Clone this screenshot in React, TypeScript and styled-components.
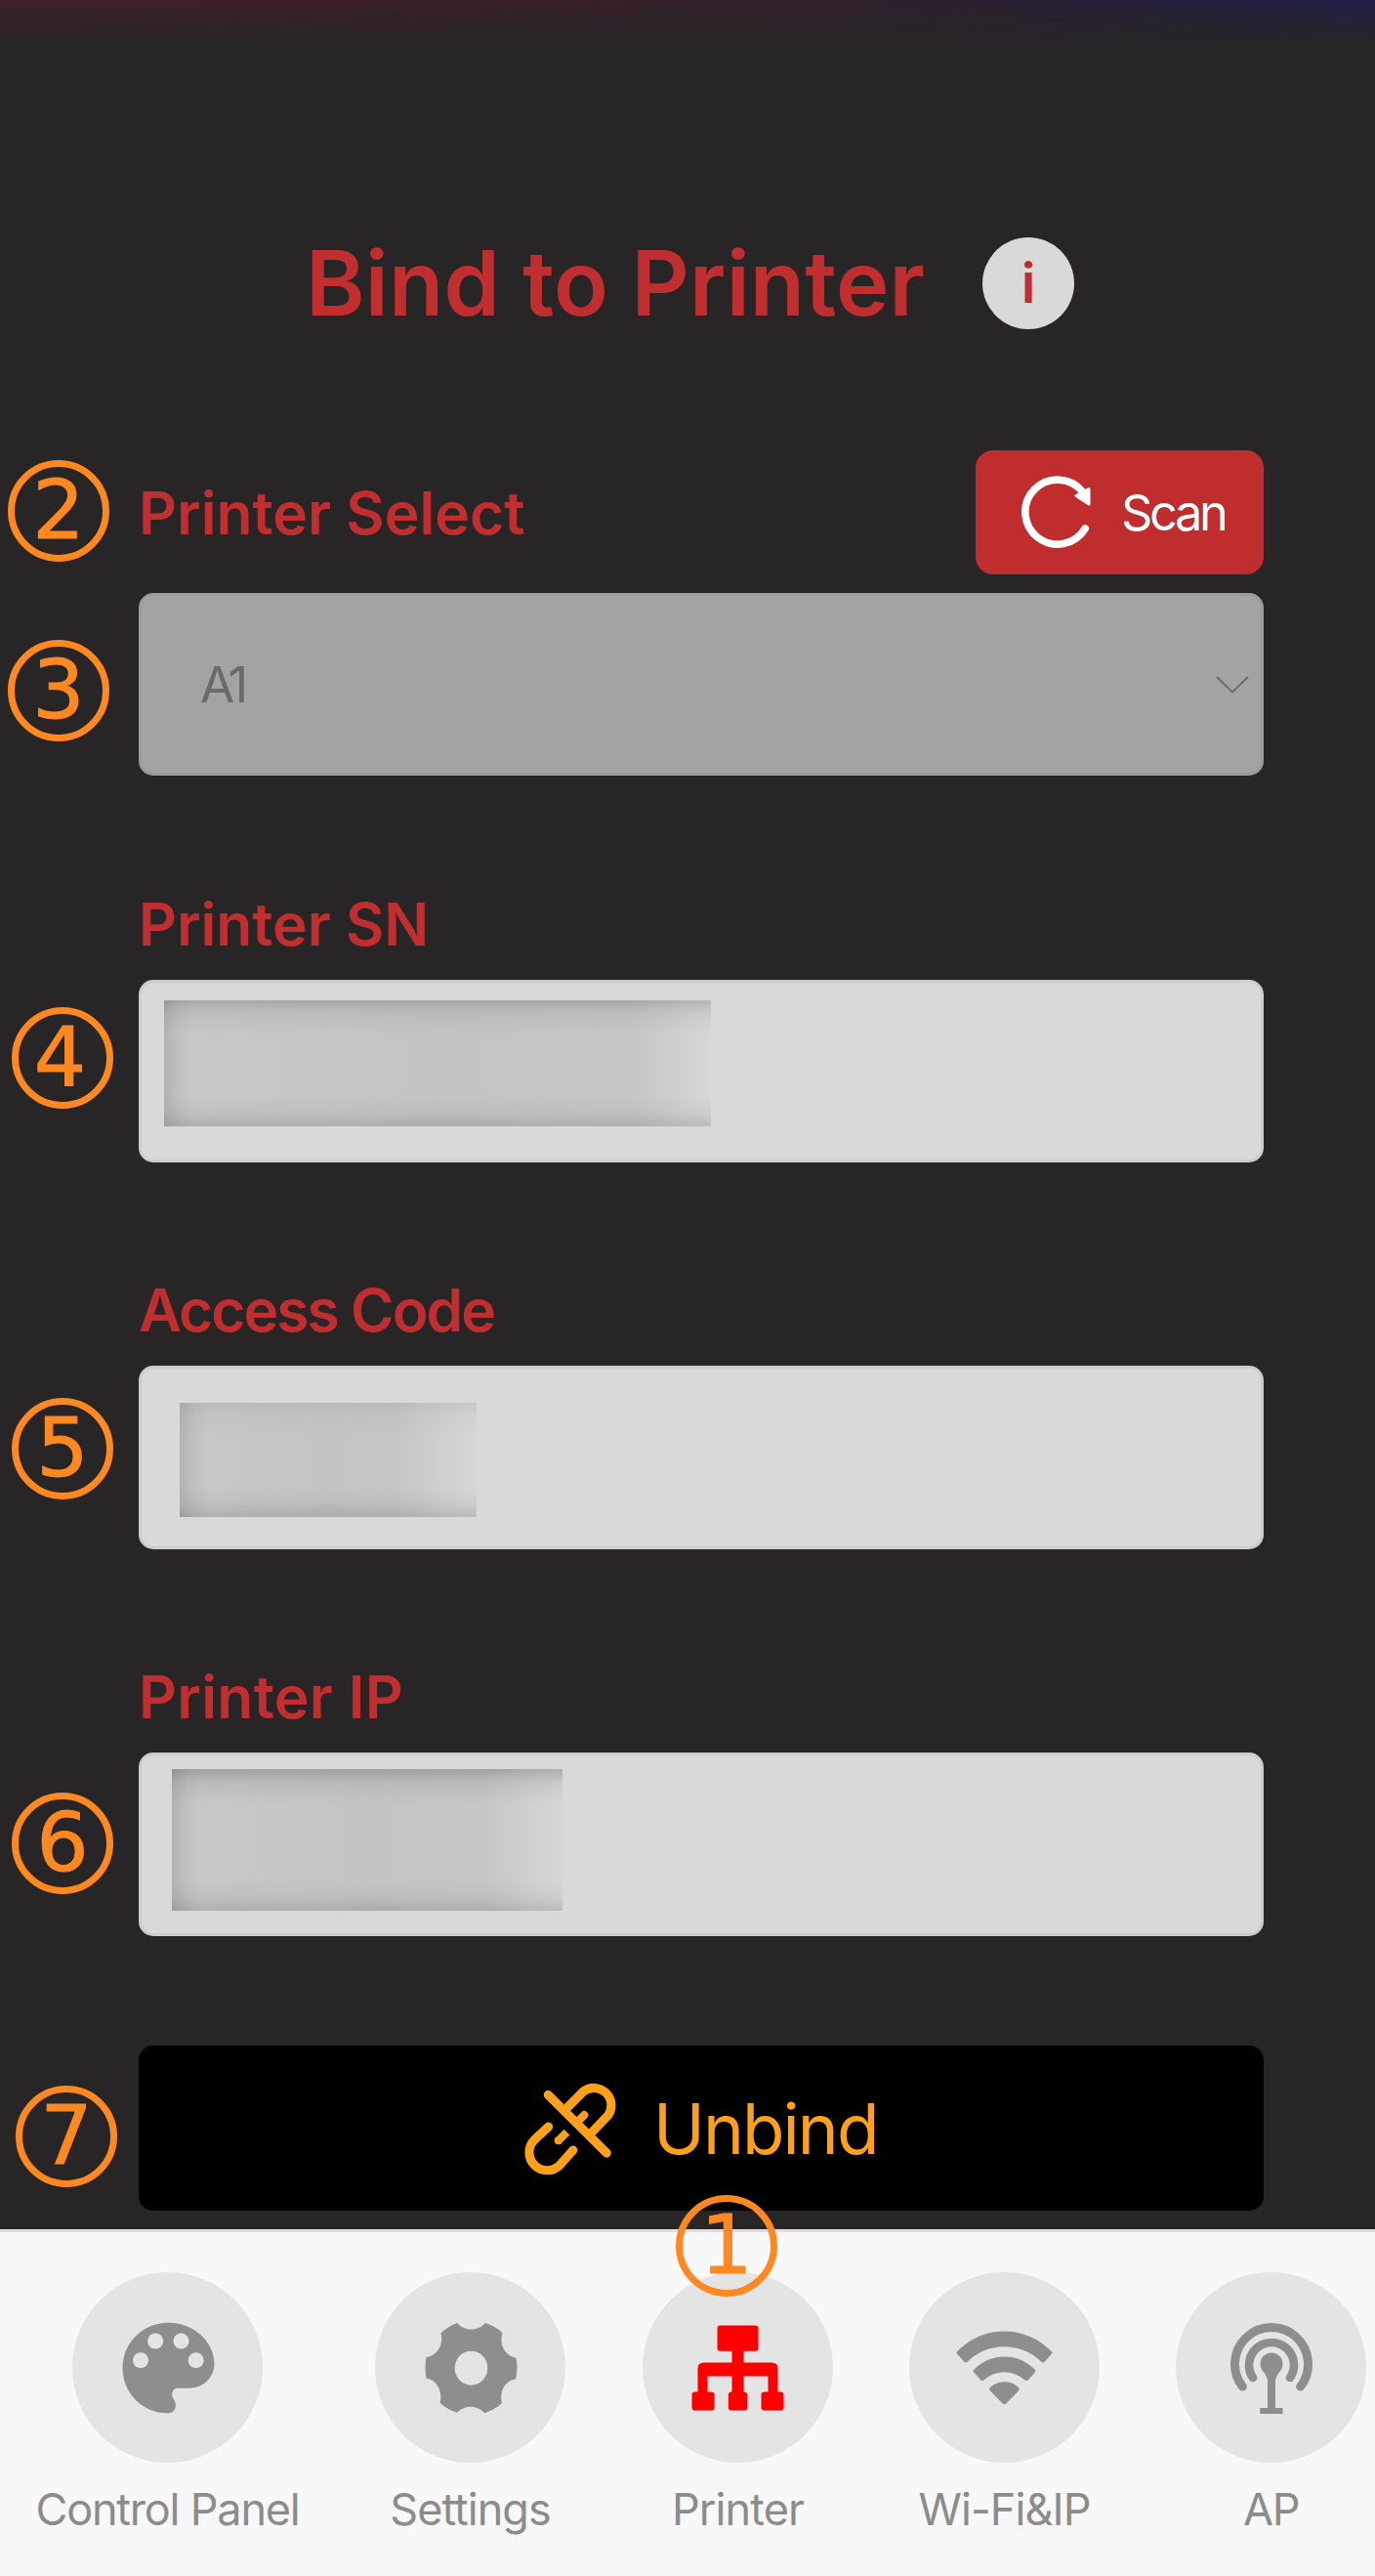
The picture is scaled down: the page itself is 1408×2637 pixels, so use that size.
import React from "react";
import styled, { createGlobalStyle } from "styled-components";

const Global = createGlobalStyle`
  * { box-sizing: border-box; }
  html, body { margin: 0; padding: 0; background: #272526; }
  body { font-family: Inter, Roboto, "Liberation Sans", sans-serif; }
  button { font: inherit; border: 0; padding: 0; cursor: pointer; }
`;

const Page = styled.div`
  position: relative;
  display: flex;
  flex-direction: column;
  width: 1408px;
  height: 2637px;
  overflow: hidden;
  background:
    linear-gradient(to bottom, rgba(39, 37, 38, 0) 0, rgba(39, 37, 38, 0.45) 16px, #272526 46px),
    linear-gradient(to right, #41202a 0%, #3a2028 35%, #2d1f2e 68%, #1e1e48 100%) 0 0 / 100% 46px no-repeat,
    #272526;
`;

const Header = styled.header`
  display: flex;
  align-items: center;
  height: 94px;
  margin-top: 243px;
  padding-left: 313px;
`;

const Title = styled.h1`
  width: 693px;
  margin: 0;
  color: #c12e30;
  font-size: 92px;
  line-height: 96px;
  font-weight: 600;
  letter-spacing: 0.15px;
  white-space: nowrap;
`;

const InfoButton = styled.button`
  width: 94px;
  height: 94px;
  border-radius: 50%;
  background: #d9d9d9;
  color: #c12e30;
  font-size: 56px;
  line-height: 94px;
  font-weight: 600;
`;

const Form = styled.main`
  display: flex;
  flex-direction: column;
  height: 1945px;
  padding: 124px 114px 0 142px;
`;

const LabelRow = styled.div`
  display: flex;
  align-items: center;
  justify-content: space-between;
  height: 127px;
  margin-bottom: 19px;
`;

const Label = styled.label<{ $tracking: number }>`
  color: #c12e30;
  font-size: 60.5px;
  line-height: 60px;
  font-weight: 600;
  letter-spacing: ${(p) => p.$tracking}px;
  white-space: nowrap;
`;

const ScanButton = styled.button`
  display: flex;
  align-items: center;
  gap: 26px;
  width: 295px;
  height: 127px;
  padding-left: 45px;
  border-radius: 18px;
  background: #c02d2f;
  color: #fff;
  font-size: 50.5px;
  letter-spacing: -3.4px;
`;

const Select = styled.div`
  display: flex;
  align-items: center;
  justify-content: space-between;
  height: 187px;
  padding: 0 12px 0 60px;
  border: 3px solid #9b9b9b;
  border-radius: 15px;
  background: #a3a3a3;
  color: #6a6a6a;
  font-size: 51px;
  letter-spacing: -5px;
`;

const Field = styled.div<{ $top: number }>`
  display: flex;
  flex-direction: column;
  gap: 27px;
  margin-top: ${(p) => p.$top}px;
`;

const Input = styled.div<{ $height: number; $padding: string }>`
  height: ${(p) => p.$height}px;
  padding: ${(p) => p.$padding};
  border: 3px solid #cdcccc;
  border-radius: 15px;
  background: #d9d9d9;
`;

const Redacted = styled.div<{ $w: number; $h: number; $edge: number }>`
  width: ${(p) => p.$w}px;
  height: ${(p) => p.$h}px;
  background:
    linear-gradient(to bottom, rgba(0, 0, 0, ${(p) => p.$edge}) 0, rgba(0, 0, 0, ${(p) => p.$edge / 3}) 13px, transparent 36px),
    linear-gradient(to top, rgba(0, 0, 0, 0.12) 0, rgba(0, 0, 0, 0.04) 14px, transparent 32px),
    linear-gradient(to right, rgba(0, 0, 0, 0.11) 0, rgba(0, 0, 0, 0.03) 16px, transparent 32px),
    linear-gradient(to right, #c8c8c8 0, #c4c4c4 50%, #c6c6c6 calc(100% - 80px), #d7d7d7 100%);
`;

const UnbindButton = styled.button`
  display: flex;
  align-items: center;
  gap: 34px;
  height: 169px;
  margin-top: 112px;
  padding-left: 392px;
  border-radius: 15px;
  background: #000;
  color: #ffa01a;
  font-size: 71px;
  letter-spacing: -1.9px;
`;

const TabBar = styled.nav`
  display: grid;
  grid-template-columns: 343px 277px 271px 275px 271px;
  flex: none;
  height: 355px;
  padding-top: 41px;
  border-top: 3px solid #dfdddd;
  background: #f8f8f8;
`;

const Tab = styled.div`
  display: flex;
  flex-direction: column;
  align-items: center;
  gap: 18px;
`;

const TabIcon = styled.div<{ $active?: boolean }>`
  display: flex;
  align-items: center;
  justify-content: center;
  width: 195px;
  height: 195px;
  border-radius: 50%;
  background: #e4e4e4;
  color: ${(p) => (p.$active ? "#ff0000" : "#8e8e8e")};
`;

const TabLabel = styled.span<{ $tracking: number }>`
  color: #8c8c8c;
  font-size: 45px;
  line-height: 60px;
  letter-spacing: ${(p) => p.$tracking}px;
  white-space: nowrap;
`;

const Step = styled.div<{ $x: number; $y: number; $shift?: number }>`
  position: absolute;
  left: ${(p) => p.$x}px;
  top: ${(p) => p.$y}px;
  width: 104px;
  height: 104px;
  border: 7px solid #ff8820;
  border-radius: 50%;
  color: #ff8820;
  font-family: "DejaVu Sans", sans-serif;
  font-size: 84px;
  line-height: 89px;
  text-align: center;
  text-indent: ${(p) => p.$shift ?? 0}px;
  -webkit-text-stroke: 1px #ff8820;
`;

const ScanIcon = () => (
  <svg width="78" height="78" viewBox="0 0 78 78" fill="none">
    <path d="M67.2 55A33 33 0 1 1 65 18" stroke="currentColor" strokeWidth="7.6" strokeLinecap="round" />
    <path d="M71 14.500V30L58 21.500Z" fill="currentColor" stroke="currentColor" strokeWidth="3" strokeLinejoin="round" />
  </svg>
);

const ChevronIcon = () => (
  <svg width="34" height="20" viewBox="0 0 34 20" fill="none">
    <path d="M1 2L17 17.500L33 2" stroke="#6a6a6a" strokeWidth="1.8" />
  </svg>
);

const UnbindIcon = () => (
  <svg width="101" height="101" viewBox="100 86 300 300" fill="none" stroke="currentColor" strokeWidth="27" strokeLinecap="round">
    <path d="M181 135L359 312" />
    <path d="M240 173L289 124A53 53 0 0 1 363 198L316 247" />
    <path d="M291 196L268 219" strokeWidth="24" />
    <path d="M182 232L139 272A54 54 0 0 0 217 348L257 303" />
    <path d="M238 248L209 277" strokeLinecap="butt" strokeWidth="24" />
    <circle cx="212" cy="274" r="12" fill="currentColor" stroke="none" />
  </svg>
);

const PaletteIcon = () => (
  <svg width="100" height="100" viewBox="124.5 190 300 300">
    <path
      fill="currentColor"
      fillRule="evenodd"
      d="M276 201C198 201 135 262 135 340C135 418 198 479 272 479C290 479 298 470 298 454C298 438 287 435 287 422C287 410 294 402 304 402H340C383 402 417 370 417 326C415 256 352 201 276 201Z
      M190.500 292.500a24 24 0 1 0 .1 0Z M236 233.500a24 24 0 1 0 .1 0Z M315 233.500a24 24 0 1 0 .1 0Z M360.500 292.500a24 24 0 1 0 .1 0Z"
    />
  </svg>
);

const GearIcon = () => (
  <svg width="100" height="100" viewBox="1054.5 190 300 300">
    <path
      fill="currentColor"
      fillRule="evenodd"
      d="M1163 202C1184 228 1229 228 1249 202C1269 208 1286 218 1302 232C1292 265 1306 301 1344 309Q1350 341 1343 374C1309 380 1292 413 1300 448Q1277 470 1247 479C1226 453 1186 453 1163 477Q1134 469 1110 447C1119 413 1102 376 1068 372Q1062 340 1068 308C1104 300 1121 268 1113 233Q1137 211 1163 202Z
      M1206 288A50.500 52.500 0 1 0 1206 393A50.500 52.500 0 1 0 1206 288Z"
    />
  </svg>
);

const TopologyIcon = () => (
  <svg width="100" height="100" viewBox="166.5 430.5 300 300" fill="currentColor">
    <rect x="252" y="450" width="126" height="79" rx="9" />
    <rect x="297" y="520" width="36" height="150" />
    <path d="M192 664V583Q192 564 211 564H419Q438 564 438 583V664H408V606H222V664Z" />
    <rect x="174" y="654" width="69" height="57" rx="10" />
    <rect x="286" y="654" width="58" height="57" rx="10" />
    <rect x="387" y="654" width="69" height="57" rx="10" />
  </svg>
);

const WifiIcon = () => (
  <svg width="100" height="100" viewBox="985.5 430.500 300 300" fill="currentColor">
    <path d="M989 538Q985 534 989 530C1069 447 1199 447 1279 530Q1283 534 1279 538L1258 561Q1253 567 1247 561C1184 500 1084 500 1021 561Q1015 567 1010 561Z" />
    <path d="M1040 594Q1036 590 1040 586C1091 533 1177 533 1228 586Q1232 590 1228 594L1207 617Q1202 622 1196 617C1160 585 1108 585 1072 617Q1066 622 1061 617Z" />
    <path d="M1091 651Q1086 645 1091 640C1115 618 1153 618 1177 640Q1182 645 1177 651L1140 689Q1134 695 1128 689Z" />
  </svg>
);

const AntennaIcon = () => (
  <svg width="100" height="100" viewBox="0 0 100 100" fill="none" stroke="currentColor">
    <path d="M20.300 69A37.500 37.500 0 1 1 79.700 69" strokeWidth="9" strokeLinecap="round" />
    <path d="M31 60A23 23 0 1 1 69 60" strokeWidth="8.600" strokeLinecap="round" />
    <circle cx="50" cy="46" r="11.500" fill="currentColor" stroke="none" />
    <path d="M42 53L46 62V91H38.300V97H61.500V91H54V62L58 53Z" fill="currentColor" stroke="none" />
  </svg>
);

const steps = [
  { n: 2, x: 8, y: 471 },
  { n: 3, x: 8, y: 655 },
  { n: 4, x: 12, y: 1031, shift: -5 },
  { n: 5, x: 12, y: 1431 },
  { n: 6, x: 12, y: 1835 },
  { n: 7, x: 16, y: 2135 },
  { n: 1, x: 692, y: 2247 },
];

const tabs = [
  { label: "Control Panel", tracking: -1.2, Icon: PaletteIcon },
  { label: "Settings", tracking: -1, Icon: GearIcon },
  { label: "Printer", tracking: -0.9, Icon: TopologyIcon, active: true },
  { label: "Wi-Fi&IP", tracking: -0.9, Icon: WifiIcon },
  { label: "AP", tracking: -1.5, Icon: AntennaIcon },
];

export default function App() {
  return (
    <>
      <Global />
      <Page>
        <Header>
          <Title>Bind to Printer</Title>
          <InfoButton>i</InfoButton>
        </Header>
        <Form>
          <LabelRow>
            <Label $tracking={0}>Printer Select</Label>
            <ScanButton>
              <ScanIcon />
              Scan
            </ScanButton>
          </LabelRow>
          <Select>
            A1
            <ChevronIcon />
          </Select>
          <Field $top={122}>
            <Label $tracking={-0.05}>Printer SN</Label>
            <Input $height={187} $padding="18px 0 0 23px">
              <Redacted $w={560} $h={129} $edge={0.15} />
            </Input>
          </Field>
          <Field $top={121}>
            <Label $tracking={-2}>Access Code</Label>
            <Input $height={188} $padding="35px 0 0 39px">
              <Redacted $w={304} $h={117} $edge={0.06} />
            </Input>
          </Field>
          <Field $top={121}>
            <Label $tracking={0.3}>Printer IP</Label>
            <Input $height={188} $padding="14px 0 0 31px">
              <Redacted $w={400} $h={145} $edge={0.19} />
            </Input>
          </Field>
          <UnbindButton>
            <UnbindIcon />
            Unbind
          </UnbindButton>
        </Form>
        <TabBar>
          {tabs.map(({ label, tracking, Icon, active }) => (
            <Tab key={label}>
              <TabIcon $active={active}>
                <Icon />
              </TabIcon>
              <TabLabel $tracking={tracking}>{label}</TabLabel>
            </Tab>
          ))}
        </TabBar>
        {steps.map((s) => (
          <Step key={s.n} $x={s.x} $y={s.y} $shift={s.shift}>
            {s.n}
          </Step>
        ))}
      </Page>
    </>
  );
}
